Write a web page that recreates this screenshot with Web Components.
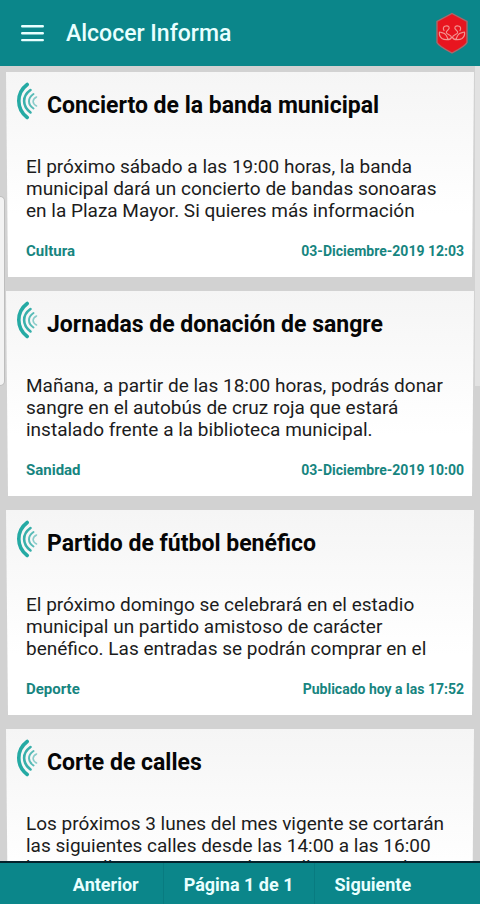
<!DOCTYPE html>
<html lang="es">
<head>
<meta charset="utf-8">
<meta name="viewport" content="width=device-width, initial-scale=1">
<title>Alcocer Informa</title>
<style>
html, body { height: 100%; margin: 0; }
body { font-family: Roboto, "Liberation Sans", sans-serif; background: #d2d2d2; }
</style>
</head>
<body>
<news-app>
  <app-bar slot="top">Alcocer Informa</app-bar>
  <news-card category="Cultura" date="03-Diciembre-2019 12:03"><span slot="title">Concierto de la banda municipal</span>El próximo sábado a las 19:00 horas, la banda municipal dará un concierto de bandas sonoaras en la Plaza Mayor. Si quieres más información</news-card>
  <news-card category="Sanidad" date="03-Diciembre-2019 10:00"><span slot="title">Jornadas de donación de sangre</span>Mañana, a partir de las 18:00 horas, podrás donar sangre en el autobús de cruz roja que estará instalado frente a la biblioteca municipal.</news-card>
  <news-card category="Deporte" date="Publicado hoy a las 17:52"><span slot="title">Partido de fútbol benéfico</span>El próximo domingo se celebrará en el estadio municipal un partido amistoso de carácter benéfico. Las entradas se podrán comprar en el</news-card>
  <news-card category="" date=""><span slot="title">Corte de calles</span>Los próximos 3 lunes del mes vigente se cortarán las siguientes calles desde las 14:00 a las 16:00 horas: calle Ramos Granados, calle Mayor y de</news-card>
  <page-nav slot="bottom">Página 1 de 1</page-nav>
</news-app>
<script>
const define = (name, html, setup) => {
  const template = document.createElement('template');
  template.innerHTML = html;
  customElements.define(name, class extends HTMLElement {
    constructor() {
      super();
      this.attachShadow({ mode: 'open' }).append(template.content.cloneNode(true));
    }
    connectedCallback() { if (setup) setup(this); }
  });
};

define('news-app', `
<style>
:host { display: flex; flex-direction: column; height: 100vh; position: relative; overflow: hidden; }
main { flex: 1; min-height: 0; overflow: hidden; display: flex; flex-direction: column; gap: 14px; padding: 6px 6px 0; }
.edge { position: absolute; left: 0; top: 196px; width: 4px; height: 188px; background: #f3f3f3; border: 1px solid #bdbdbd; border-left: 0; border-radius: 0 5px 5px 0; }
.bar { position: absolute; right: 0; top: 66px; width: 5px; height: 320px; background: #e2e2e2; }
</style>
<slot name="top"></slot>
<main><slot></slot></main>
<slot name="bottom"></slot>
<div class="edge"></div><div class="bar"></div>`);

define('app-bar', `
<style>
:host { display: block; flex: none; }
header { display: flex; align-items: center; height: 66px; padding: 0 12px 0 20px; background: #0b868a; color: #e9ffff; }
button { width: 24px; height: 24px; padding: 0; border: 0; background: none; color: inherit; }
svg { display: block; }
h1 { flex: 1; margin: 2px 0 0 22px; font-size: 23px; line-height: 28px; font-weight: 500; }
</style>
<header>
<button aria-label="Menú"><svg width="24" height="24" viewBox="0 0 24 24" stroke="currentColor" stroke-width="2.4" stroke-linecap="round"><path d="M2.2 5.2h20.600M2.200 12.200h20.600M2.200 19.100h20.600"/></svg></button>
<h1><slot></slot></h1>
<svg width="32" height="42" viewBox="0 0 32 42" fill="none"><path d="M16 1.500 31 9.500V30.500Q29.500 34 16 41Q2.500 34 1 30.500V9.500Z" fill="#e8151f" stroke="#a9686c" stroke-width="1.400"/><g stroke="#f2938f" stroke-width="1.200" stroke-linecap="round" stroke-linejoin="round"><path id="w" d="M8 18.500C5.500 14.500 11 12.500 13 15C14.500 18 9 18.500 10.500 21C12 23 15.500 23 15.500 25.500C14.500 28.500 8 28 6 26.500C3.500 24.500 3 22.500 3.500 20C6 21 8.500 20.500 10 23C11 24.500 11.500 26 12 27.500"/><use href="#w" transform="matrix(-1 0 0 1 32 0)"/></g></svg>
</header>`);

define('signal-icon', `
<style>:host { display: block; width: 24px; height: 40px; } svg { display: block; }</style>
<svg width="24" height="40" viewBox="0 0 24 40" fill="none" stroke-linecap="round"><path d="M11.200 4.500C0 13 0 29 11.200 37.500" stroke="#25aaa4" stroke-width="3.600"/><path d="M14.500 10C6 16 6 26 14.500 32.500" stroke="#38b0ab" stroke-width="2.600"/><path d="M17.500 14C11.500 18 11.500 24.500 17.500 28.500" stroke="#58bbb7" stroke-width="2"/><path d="M20.500 17C16 19.500 16 23.500 20.500 26" stroke="#8accca" stroke-width="1.600"/></svg>`);

define('news-card', `
<style>
:host { display: block; flex: none; }
article { box-sizing: border-box; display: flex; flex-direction: column; min-height: 205px; padding: 8px 10px 15px; background: linear-gradient(#f5f5f5, #fff 70%); clip-path: polygon(0 0, 100% 0, calc(100% - 2px) 100%, 2px 100%); }
header { display: flex; align-items: center; gap: 7px; height: 44px; }
h2 { margin: 8px 0 0; font-size: 23px; line-height: 28px; font-weight: 700; color: #060606; white-space: nowrap; }
signal-icon { align-self: flex-start; }
p { margin: 32px 14px 0 10px; height: 66px; overflow: hidden; font-size: 19px; line-height: 22px; color: #1c1c1c; }
footer { display: flex; justify-content: space-between; margin: 20px 0 0 10px; font-size: 15px; line-height: 18px; font-weight: 700; color: #17857f; }
time { font-size: 14px; }
</style>
<article>
<header><signal-icon></signal-icon><h2><slot name="title"></slot></h2></header>
<p><slot></slot></p>
<footer><span class="category"></span><time></time></footer>
</article>`, host => {
  host.shadowRoot.querySelector('.category').textContent = host.getAttribute('category');
  host.shadowRoot.querySelector('time').textContent = host.getAttribute('date');
});

define('page-nav', `
<style>
:host { display: block; flex: none; }
nav { box-sizing: border-box; display: flex; justify-content: center; height: 43px; padding-left: 4px; border-top: 2px solid #04222c; background: #0b868a; color: #e9ffff; font-size: 18px; line-height: 43px; font-weight: 700; }
button { font: inherit; color: inherit; background: none; border: 0; padding: 0 24px; }
span { padding: 0 20px; border: solid #087b80; border-width: 0 1px; }
button:last-child { padding-left: 20px; }
</style>
<nav aria-label="Páginas"><button>Anterior</button><span><slot></slot></span><button>Siguiente</button></nav>`);
</script>
</body>
</html>
